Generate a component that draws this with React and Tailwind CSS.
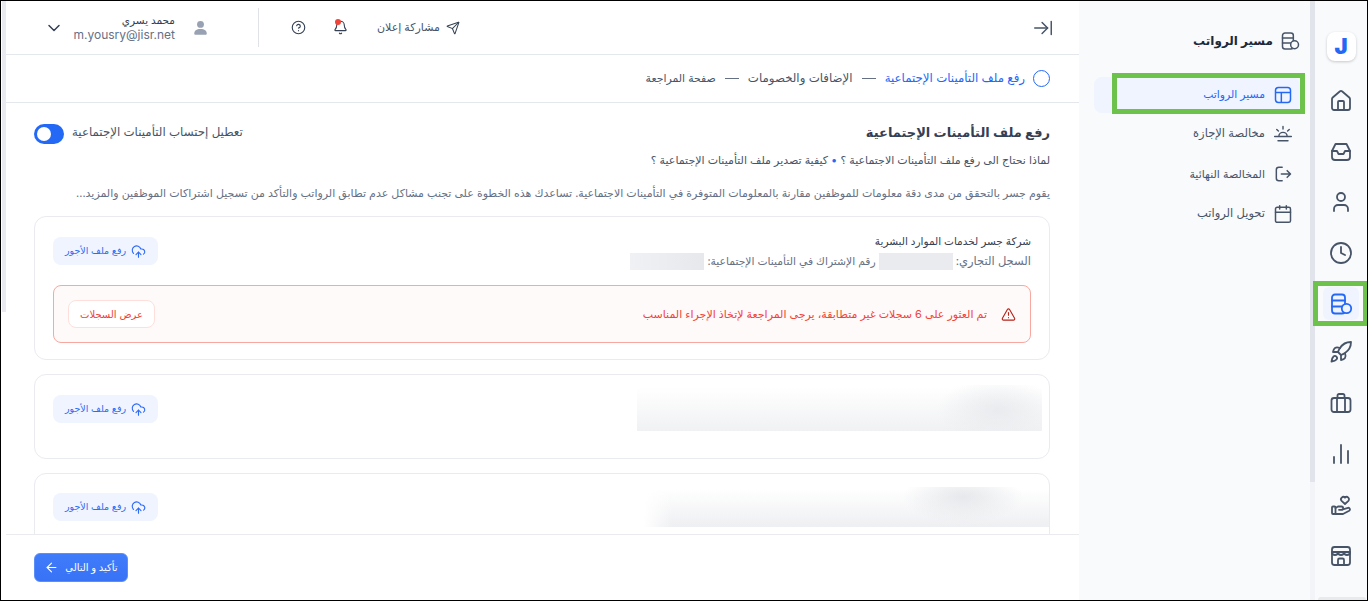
import { House, User, Clock, Rocket, ChartNoAxesColumn, Send, Bell, CircleHelp, ChevronDown, ArrowLeft, CloudUpload, TriangleAlert, Calendar, ArrowRightToLine } from 'lucide-react'

const arabic = "font-['Inter','DejaVu_Sans',sans-serif]"

// Stacked coins with a small circle, used for the payroll entry
function CoinsIcon({ className, circleFill = '#eff4ff' }) {
  return (
    <svg className={className} viewBox="0 0 24 24" fill="none" stroke="currentColor" strokeWidth="1.8" strokeLinecap="round" strokeLinejoin="round">
      <rect x="3" y="2.5" width="13" height="19" rx="3" />
      <path d="M3 8.5h13M3 14.5h10" />
      <circle cx="17.5" cy="16.5" r="4.7" fill={circleFill} />
    </svg>
  )
}

function TrayIcon({ className }) {
  return (
    <svg className={className} viewBox="0 0 24 24" fill="none" stroke="currentColor" strokeWidth="1.8" strokeLinecap="round" strokeLinejoin="round">
      <path d="M6.5 4h11l3.5 7v6a3 3 0 0 1-3 3H6a3 3 0 0 1-3-3v-6z" />
      <path d="M3 11h5l1.5 3h5l1.5-3h5" />
    </svg>
  )
}

function BriefcaseIcon({ className }) {
  return (
    <svg className={className} viewBox="0 0 24 24" fill="none" stroke="currentColor" strokeWidth="1.8" strokeLinejoin="round">
      <rect x="2.5" y="7" width="19" height="14" rx="2.5" />
      <path d="M8.5 7V4.5A1.5 1.5 0 0 1 10 3h4a1.5 1.5 0 0 1 1.5 1.5V7M8 7v14M16 7v14" />
    </svg>
  )
}

function HandHeartIcon({ className }) {
  return (
    <svg className={className} viewBox="0 0 24 24" fill="none" stroke="currentColor" strokeWidth="1.8" strokeLinecap="round" strokeLinejoin="round">
      <path d="M16 11 12.6 7.8a2.3 2.3 0 0 1 3.4-3.1 2.3 2.3 0 0 1 3.4 3.1z" />
      <rect x="3" y="13.5" width="3.5" height="7.5" rx="1" />
      <path d="M6.5 15 9 13.5h3.5a1.6 1.6 0 0 1 0 3.3H10m3-.2 6-1.8a1.6 1.6 0 0 1 1.2 2.9L14 21H6.5" />
    </svg>
  )
}

function StoreIcon({ className }) {
  return (
    <svg className={className} viewBox="0 0 24 24" fill="none" stroke="currentColor" strokeWidth="1.8" strokeLinecap="round" strokeLinejoin="round">
      <rect x="3" y="3" width="18" height="18" rx="2.5" />
      <path d="M3 8h18M3 8a3 3 0 0 0 6 0 3 3 0 0 0 6 0 3 3 0 0 0 6 0M9 21v-5a1.5 1.5 0 0 1 1.5-1.5h3A1.5 1.5 0 0 1 15 16v5" />
    </svg>
  )
}

function TableIcon({ className }) {
  return (
    <svg className={className} viewBox="0 0 24 24" fill="none" stroke="currentColor" strokeWidth="1.8" strokeLinejoin="round">
      <rect x="3" y="3" width="18" height="18" rx="3.5" />
      <path d="M3 9h18M10 9v12" />
    </svg>
  )
}

function HorizonIcon({ className }) {
  return (
    <svg className={className} viewBox="0 0 24 24" fill="none" stroke="currentColor" strokeWidth="1.7" strokeLinecap="round">
      <path d="M7 15a5 5 0 0 1 10 0M2 15h20M6 20h12M12 3v3M4.5 6.5l2 2M19.5 6.5l-2 2" />
    </svg>
  )
}

function ExitIcon({ className }) {
  return (
    <svg className={className} viewBox="0 0 24 24" fill="none" stroke="currentColor" strokeWidth="1.8" strokeLinecap="round" strokeLinejoin="round">
      <path d="M11 4H7a3 3 0 0 0-3 3v10a3 3 0 0 0 3 3h4M10 12h11M17 8l4 4-4 4" />
    </svg>
  )
}

function PersonIcon({ className }) {
  return (
    <svg className={className} viewBox="0 0 24 24" fill="currentColor">
      <circle cx="12" cy="7" r="5.5" />
      <path d="M2 22c0-5 3.5-7.5 10-7.5S22 17 22 22a1.5 1.5 0 0 1-1.5 1.5h-17A1.5 1.5 0 0 1 2 22z" />
    </svg>
  )
}

const subItems = [
  { label: 'مخالصة الإجازة', Icon: HorizonIcon, size: 'text-[11.5px]' },
  { label: 'المخالصة النهائية', Icon: ExitIcon, size: 'text-[11px]' },
  { label: 'تحويل الرواتب', Icon: Calendar, size: 'text-[11.5px]' },
]

const railIcons = [House, TrayIcon, User, Clock]
const railIconsBottom = [Rocket, BriefcaseIcon, ChartNoAxesColumn, HandHeartIcon, StoreIcon]

function UploadButton() {
  return (
    <button className="flex h-7 w-[105px] items-center justify-center gap-[5px] rounded-lg bg-[#eff4ff] text-[9.5px] text-[#2f6bf2]">
      <CloudUpload className="h-[15px] w-[15px]" strokeWidth={1.8} />
      رفع ملف الأجور
    </button>
  )
}

function Card({ height, children }) {
  return (
    <div className={`flex shrink-0 justify-between rounded-xl border border-[#e9ebef] bg-white ${height}`}>
      {children}
    </div>
  )
}

export default function App() {
  return (
    <div dir="rtl" className={`relative flex h-[601px] w-[1368px] overflow-hidden border border-black bg-white ${arabic}`}>
      {/* Icon rail */}
      <aside className="relative flex w-[52px] shrink-0 flex-col items-center bg-[#f9fafc] pt-[31px] text-[#475467]">
        <div className="flex h-[29px] w-[29px] items-center justify-center rounded-lg bg-white text-[22px] font-black text-[#2469f6] shadow-[0_1px_3px_rgba(0,0,0,0.2)]">J</div>
        <div className="mt-[28px] flex flex-col items-center gap-[26.5px]">
          {railIcons.map((Icon, i) => <Icon key={i} className="h-6 w-6" strokeWidth={1.8} />)}
        </div>
        <div className="mt-[22.5px] flex h-[33px] w-9 items-center justify-center rounded-md bg-[#eff4ff] text-[#2469f6]">
          <CoinsIcon className="h-6 w-6" />
        </div>
        <div className="mt-[20px] flex flex-col items-center gap-[27px]">
          {railIconsBottom.map((Icon, i) => <Icon key={i} className="h-6 w-6" strokeWidth={1.8} />)}
        </div>
        <div className="absolute right-[1px] bottom-0 left-[3px] h-[3px] rounded-t bg-[#e8eaee]" />
      </aside>

      {/* Scrollbar between rail and sub menu */}
      <div className="w-[5px] shrink-0 bg-[#f3f4f7]">
        <div className="h-[481px] bg-[#e1e4ea]" />
      </div>

      {/* Sub menu */}
      <aside className="flex w-[231px] shrink-0 flex-col bg-[#f9fafc] pr-[10px] pl-[15px]">
        <div className="mt-[30px] flex h-5 items-center gap-[7px] text-[12px] font-semibold text-[#1d2939]">
          <CoinsIcon className="h-5 w-5 text-[#475467]" circleFill="#f9fafc" />
          مسير الرواتب
        </div>
        <div className="mt-[26px] flex h-9 items-center gap-2 rounded-lg bg-[#eff4ff] pr-[7px] text-[10.8px] text-[#2469f6]">
          <TableIcon className="h-5 w-5" />
          مسير الرواتب
        </div>
        <div className="mt-px flex flex-col">
          {subItems.map(({ label, Icon, size }) => (
            <div key={label} className={`flex h-10 items-center gap-2 pr-[7px] text-[#475467] ${size}`}>
              <Icon className="h-5 w-5" strokeWidth={1.8} />
              {label}
            </div>
          ))}
        </div>
      </aside>

      {/* Main column */}
      <main className="flex min-w-0 flex-1 flex-col">
        <header dir="ltr" className="flex h-[54px] shrink-0 items-center border-b border-[#e4e7ec] pl-[38px] pr-[25px]">
          <ChevronDown className="h-5 w-5 text-[#344054]" strokeWidth={1.8} />
          <div className="ml-[3px] flex w-[108px] flex-col items-end text-[12px] leading-[14px]">
            <span dir="rtl" className="text-[10.5px] text-[#344054]">محمد يسري</span>
            <span className="text-[#667085]">m.yousry@jisr.net</span>
          </div>
          <PersonIcon className="ml-[18px] h-[15px] w-[15px] text-[#98a2b3]" />
          <div className="ml-[50px] h-[39px] w-px bg-[#dfe3e8]" />
          <CircleHelp className="ml-[32px] h-[15px] w-[15px] text-[#344054]" strokeWidth={1.8} />
          <div className="relative ml-[27px]">
            <Bell className="h-[15px] w-[15px] text-[#344054]" strokeWidth={1.8} />
            <span className="absolute -top-[1px] left-[2px] h-[6px] w-[6px] rounded-full bg-[#f04438]" />
          </div>
          <div className="ml-[29px] flex items-center gap-[6px] text-[11px] text-[#475467]">
            <span dir="rtl">مشاركة إعلان</span>
            <Send className="h-[14px] w-[14px] text-[#344054]" strokeWidth={1.8} />
          </div>
          <ArrowRightToLine className="ml-auto h-[22px] w-[22px] text-[#475467]" strokeWidth={1.6} />
        </header>

        {/* Stepper */}
        <nav className="flex h-[48px] shrink-0 items-center border-b border-[#e4e7ec] pr-[29px] text-[11.8px] text-[#475467]">
          <span className="h-[17px] w-[17px] rounded-full border-[1.5px] border-[#2469f6]" />
          <span className="mr-[8px] text-[#2469f6]">رفع ملف التأمينات الإجتماعية</span>
          <span className="mx-[9px] h-px w-[14px] bg-[#667085]" />
          <span>الإضافات والخصومات</span>
          <span className="mx-[9px] h-px w-[14px] bg-[#667085]" />
          <span className="text-[10.9px]">صفحة المراجعة</span>
        </nav>

        {/* Scrollable content */}
        <div className="flex min-h-0 flex-1 flex-col overflow-hidden pr-[29px] pl-[28px]">
          <div className="mt-[19px] flex items-start justify-between">
            <h1 className="text-[13px] font-semibold leading-5 text-[#344054]">رفع ملف التأمينات الإجتماعية</h1>
            <div className="mt-[2px] flex items-center gap-[8px] text-[11.8px] text-[#475467]">
              <span className="pb-[2px]">تعطيل إحتساب التأمينات الإجتماعية</span>
              <span className="flex h-5 w-[30px] items-center justify-end rounded-full bg-[#2469f6] px-[3px]">
                <span className="h-[14px] w-[14px] rounded-full bg-white" />
              </span>
            </div>
          </div>
          <p className="mt-[8px] text-[11px] leading-4 text-[#475467]">
            لماذا نحتاج الى رفع ملف التأمينات الاجتماعية ؟ <span className="text-[#2469f6]">•</span> كيفية تصدير ملف التأمينات الإجتماعية ؟
          </p>
          <p className="mt-[17px] whitespace-nowrap text-[11px] leading-4 text-[#667085]">
            يقوم جسر بالتحقق من مدى دقة معلومات للموظفين مقارنة بالمعلومات المتوفرة في التأمينات الاجتماعية. تساعدك هذه الخطوة على تجنب مشاكل عدم تطابق الرواتب والتأكد من تسجيل اشتراكات الموظفين والمزيد...
          </p>

          <div className="mt-[15px] flex flex-col gap-[14px]">
            <div className="h-[144px] shrink-0 rounded-xl border border-[#e9ebef] bg-white px-[18px] pt-[16px]">
              <div className="flex justify-between">
                <div className="leading-[17px]">
                  <div className="text-[10.5px] text-[#344054]">شركة جسر لخدمات الموارد البشرية</div>
                  <div className="mt-[3px] flex items-center text-[#667085]">
                    <span className="text-[11.5px]">السجل التجاري:</span>
                    <span className="mx-[3px] h-[17px] w-[74px] bg-[#e9ebef]" />
                    <span className="text-[10.75px]">رقم الإشتراك في التأمينات الإجتماعية:</span>
                    <span className="mr-[3px] h-[17px] w-[74px] bg-[linear-gradient(90deg,#f0f1f4,#e6e8ec)]" />
                  </div>
                </div>
                <div className="mt-[4px]"><UploadButton /></div>
              </div>
              <div className="mt-[15px] flex h-[58px] items-center justify-between rounded-lg border border-[#f7a8a0] bg-[#fffafa] px-[14px] text-[11px] text-[#f04438]">
                <div className="flex items-center gap-[14px]">
                  <TriangleAlert className="h-[15px] w-[15px] text-[#b42318]" strokeWidth={1.8} />
                  تم العثور على 6 سجلات غير متطابقة، يرجى المراجعة لإتخاذ الإجراء المناسب
                </div>
                <button className="flex h-7 w-[87px] items-center justify-center rounded-lg border border-[#fde0dc] bg-white text-[10px] text-[#f04438]">عرض السجلات</button>
              </div>
            </div>

            <Card height="h-[85px]">
              <div className="mt-[10px] mr-[7px] h-[46px] w-[405px] bg-[radial-gradient(ellipse_60px_32px_at_89%_55%,#e9ebee,transparent),linear-gradient(180deg,#ffffff_5%,#f0f1f3)]" />
              <div className="mt-[20px] ml-[18px]"><UploadButton /></div>
            </Card>

            <Card height="h-[84px]">
              <div className="mt-[13px] h-[40px] w-[409px] bg-[linear-gradient(90deg,#ffffff_1%,transparent_8%),radial-gradient(ellipse_60px_26px_at_79%_25%,#e6e8eb,transparent),linear-gradient(180deg,#ffffff_5%,#eeeff2)]" />
              <div className="mt-[19px] ml-[18px]"><UploadButton /></div>
            </Card>
          </div>
        </div>

        <footer className="flex h-[66px] shrink-0 items-center justify-end border-t border-[#e9ebef] pl-[28px]">
          <button className="flex h-[29px] w-[94px] items-center justify-center gap-[6px] rounded-md border border-[#5b8ef8] bg-[linear-gradient(180deg,#3f7cfa,#3872f6)] text-[10px] font-medium text-white">
            تأكيد و التالي
            <ArrowLeft className="h-[15px] w-[15px]" strokeWidth={1.8} />
          </button>
        </footer>
      </main>

      {/* Scrollbar gutter of the main panel */}
      <div className="w-[5px] shrink-0">
        <div className="h-[311px] w-[4px] bg-[#e8eaef]" />
      </div>

      {/* Green highlight boxes drawn over the screenshot */}
      <div className="absolute top-[72px] left-[1111px] h-[41px] w-[193px] border-[5px] border-[#6cc24a]" />
      <div className="absolute top-[280px] left-[1312px] h-[45px] w-[55px] border-[5px] border-[#6cc24a]" />
    </div>
  )
}
